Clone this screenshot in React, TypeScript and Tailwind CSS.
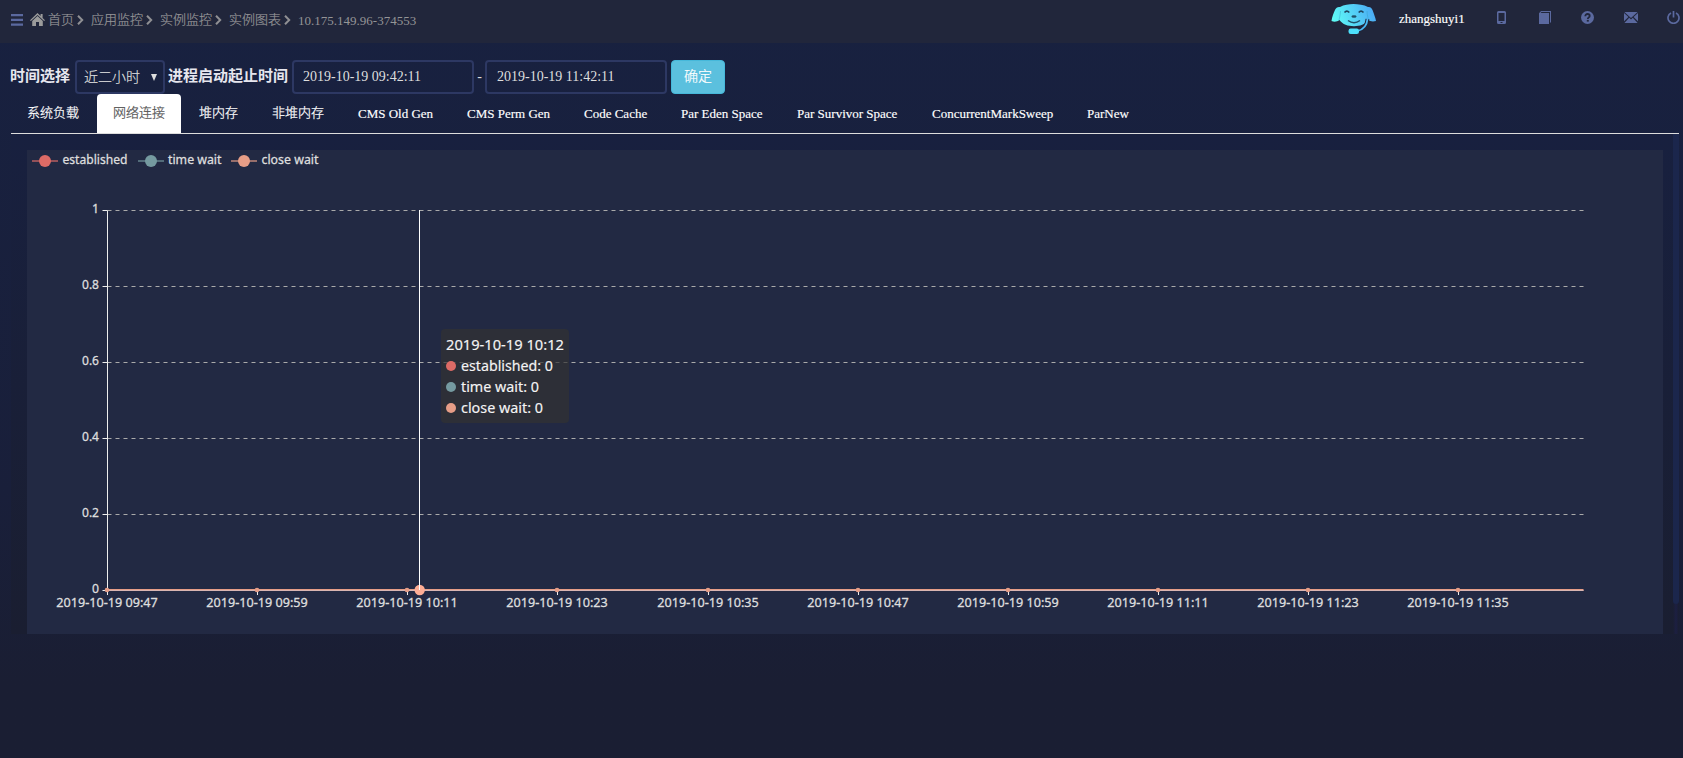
import React from "react";

const crumbs = ["首页", "应用监控", "实例监控", "实例图表"];

const tabs = [
  { label: "系统负载", width: "w-[84px]" },
  { label: "网络连接", width: "w-[84px]" },
  { label: "堆内存", width: "w-[71px]" },
  { label: "非堆内存", width: "w-[84px]" },
  { label: "CMS Old Gen", width: "w-[107px]", latin: true },
  { label: "CMS Perm Gen", width: "w-[115px]", latin: true },
  { label: "Code Cache", width: "w-[95px]", latin: true },
  { label: "Par Eden Space", width: "w-[114px]", latin: true },
  { label: "Par Survivor Space", width: "w-[133px]", latin: true },
  { label: "ConcurrentMarkSweep", width: "w-[153px]", latin: true },
  { label: "ParNew", width: "w-[75px]", latin: true },
];

const series = [
  { name: "established", color: "#dd6b66", x: 5, textX: 35.5, textWidth: 65 },
  { name: "time wait", color: "#759aa0", x: 111, textX: 141, textWidth: 53.5 },
  { name: "close wait", color: "#e69d87", x: 204, textX: 234.5, textWidth: 57 },
];

const yTicks = ["1", "0.8", "0.6", "0.4", "0.2", "0"];
const xTicks = ["09:47", "09:59", "10:11", "10:23", "10:35", "10:47", "10:59", "11:11", "11:23", "11:35"];

const AXIS_X = 80.5;
const AXIS_RIGHT = 1556.5;
const AXIS_TOP = 60.5;
const Y_STEP = 75.9;
const X_STEP = 150.15;

function Chevron() {
  return (
    <svg className="ml-[3px] mr-[7px] h-[10px] w-[7px]" viewBox="0 0 7 10">
      <path d="M1 .8 5.2 5 1 9.2" fill="none" stroke="#8f8f93" strokeWidth="2" />
    </svg>
  );
}

function HomeIcon() {
  return (
    <svg className="ml-[7px] mr-[3px] h-[13px] w-[15px]" viewBox="0 0 15 13" fill="#9b9b9b">
      <path d="M7.5 0 10.6 3V1h2v4L15 7.2l-.9.9-6.6-6.2L.9 8.1 0 7.2Z" />
      <path d="M7.5 3 12.8 8v5H9V9H6v4H2.2V8Z" />
    </svg>
  );
}

function Mascot() {
  return (
    <svg className="h-[31px] w-[46px]" viewBox="0 0 46 31">
      <defs>
        <linearGradient id="mascot" x1="0" x2="1" y1="0.6" y2="0.4">
          <stop offset="0" stopColor="#5ffdf6" />
          <stop offset="1" stopColor="#4aa8f5" />
        </linearGradient>
      </defs>
      <path
        d="M9 3C13 .8 18 0 22.500 0S33 .8 37 3c2-.4 3.500.5 4.500 3 1.500 4 3 8 3.500 11-3 .8-6 .4-8-1-3 4.500-8 6.200-14 6.200S11.500 20.500 8.500 16C6 18 3 18 .5 17 1 13 2.500 9 4 6c1-2.500 3-3.500 5-3Z"
        fill="url(#mascot)"
      />
      <path d="M13.500 8.500q2.300-2.800 4.800 0M27.700 8.500q2.300-2.800 4.800 0" fill="none" stroke="#204760" strokeWidth="1.600" />
      <path d="M9.500 7c-.3 4-.8 6.500-1.500 9M36 7c.3 4 .8 6.500 1.500 9" fill="none" stroke="#2f9cc0" strokeWidth="0.700" opacity="0.600" />
      <ellipse cx="23" cy="12.500" rx="2.600" ry="1.300" fill="#205069" />
      <path d="M17 16.500q6 4.500 12 0" fill="none" stroke="#205069" strokeWidth="1.500" />
      <path d="M36.500 15c-.5 6-4 10.500-10 12" fill="none" stroke="#21263b" strokeWidth="3.800" />
      <path d="M36.500 15c-.5 6-4 10.500-10 12" fill="none" stroke="#49baf7" strokeWidth="1.800" />
      <rect x="17.500" y="24.500" width="10.500" height="5.500" rx="2.200" fill="#4de0fb" />
    </svg>
  );
}

function Toolbar() {
  return (
    <div className="flex h-[35px] items-center">
      <svg className="mr-[33px] h-[14px] w-[9px]" viewBox="0 0 9 14">
        <path fillRule="evenodd" fill="#5b699f" d="M1.500 0h6A1.500 1.500 0 0 1 9 1.500v10A1.500 1.500 0 0 1 7.500 13h-6A1.500 1.500 0 0 1 0 11.500v-10A1.500 1.500 0 0 1 1.500 0ZM1.500 2v8h6V2Zm2 9v1h2v-1Z" />
      </svg>
      <svg className="mr-[30px] h-[13px] w-[12px]" viewBox="0 0 12 13" fill="#5b699f">
        <path d="M0 2.200 2 0h10v11l-1 1V1H2.500L1.500 2H10v11H0Z" />
      </svg>
      <svg className="mr-[30px] h-[13px] w-[13px]" viewBox="0 0 13 13">
        <circle cx="6.500" cy="6.500" r="6.500" fill="#5b699f" />
        <path d="M4.300 5.200c0-1.500.9-2.200 2.200-2.200s2.200.7 2.200 1.900c0 1.500-1.900 1.400-1.900 3" fill="none" stroke="#21263b" strokeWidth="1.800" />
        <path d="M5.800 8.900h2v1.700h-2z" fill="#21263b" />
      </svg>
      <svg className="mr-[29px] h-[11px] w-[14px]" viewBox="0 0 14 11" fill="#5b699f">
        <path d="M.4 0h13.200L7 6ZM0 1l4.400 4.100L0 9.200ZM14 1v8.200L9.600 5.100ZM.4 11l4.800-5.200L7 7.400l1.800-1.600 4.800 5.200Z" />
      </svg>
      <svg className="h-[13px] w-[13px]" viewBox="0 0 13 13" fill="none" stroke="#5b699f" strokeWidth="1.700">
        <path d="M4 1.900a5.500 5.500 0 1 0 5 0M6.500 0v6.500" />
      </svg>
    </div>
  );
}

function Header() {
  return (
    <header className="flex h-[43px] justify-between bg-[#21263b]">
      <nav className="flex h-[39px] items-center pl-[11px] text-[13px] text-[#949496]">
        <svg className="h-[12px] w-[12px]" viewBox="0 0 12 12" fill="#5b699f">
          <path d="M0 0h12v2.200H0zM0 4.800h12V7H0zM0 9.600h12v2.200H0z" />
        </svg>
        <HomeIcon />
        {crumbs.map((crumb) => (
          <React.Fragment key={crumb}>
            <span className="font-light [-webkit-text-stroke:0.2px_#949496]">{crumb}</span>
            <Chevron />
          </React.Fragment>
        ))}
        <span className="pt-[2px]">10.175.149.96-374553</span>
      </nav>
      <div className="flex pr-[3px]">
        <div className="pt-[4px]">
          <Mascot />
        </div>
        <span className="ml-[22px] mr-[32px] w-[66px] pt-[9px] text-[13px] leading-[20px] text-white [-webkit-text-stroke:0.15px_white]">zhangshuyi1</span>
        <Toolbar />
      </div>
    </header>
  );
}

function Filters() {
  return (
    <div className="flex h-[34px] items-center text-[14px] text-[#dedede]">
      <label className="-ml-px w-[65px] whitespace-nowrap pb-[2px] text-[15px] font-bold text-[#e6e6ee]">时间选择</label>
      <div className="flex h-[34px] w-[90px] items-center justify-between rounded-[4px] border-2 border-[#2d3863] pl-[7px] pr-[6px]">
        <span className="font-light [-webkit-text-stroke:0.2px_#dedede]">近二小时</span>
        <svg className="h-[7px] w-[6px]" viewBox="0 0 6 7">
          <path d="M0 0h6L3 7Z" fill="#dedede" />
        </svg>
      </div>
      <label className="ml-[3px] w-[124px] whitespace-nowrap pb-[2px] text-[15px] font-bold text-[#e6e6ee]">进程启动起止时间</label>
      <div className="flex h-[34px] w-[182px] items-center rounded-[4px] border-2 border-[#2d3863] pb-[2px] pl-[9px]">2019-10-19 09:42:11</div>
      <span className="w-[11px] pb-[2px] text-center">-</span>
      <div className="flex h-[34px] w-[182px] items-center rounded-[4px] border-2 border-[#2d3863] pb-[2px] pl-[10px]">2019-10-19 11:42:11</div>
      <button className="ml-[4px] h-[34px] w-[54px] rounded-[4px] border border-[#46b8da] bg-[#5bc0de] pb-[2px] font-light text-white [-webkit-text-stroke:0.2px_white]">确定</button>
    </div>
  );
}

function Tabs() {
  return (
    <div className="flex h-[40px] gap-[2px] border-b border-[#dddddd] text-[13px] text-white">
      {tabs.map((tab, i) => (
        <div
          key={tab.label}
          className={`${tab.width} flex h-[39px] items-center whitespace-nowrap pl-[16px] ${
            i === 1 ? "rounded-t-[4px] bg-white text-[#555555]" : ""
          } ${tab.latin ? "[-webkit-text-stroke:0.15px_white]" : "pb-[1px] font-light [-webkit-text-stroke:0.25px_currentColor]"}`}
        >
          {tab.label}
        </div>
      ))}
    </div>
  );
}

function Chart() {
  const baseline = AXIS_TOP + 5 * Y_STEP;
  return (
    <div className="relative h-[484px] w-[1636px] bg-[#222943]">
      <svg
        className="block h-[484px] w-[1636px] font-['Noto_Sans','Open_Sans',sans-serif] text-[13px] [&_text]:[stroke-width:0.3px] [&_text]:[stroke:#dedede]"
        viewBox="0 0 1636 484"
        fill="#dedede"
      >
        {series.map((s) => (
          <g key={s.name}>
            <path d={`M${s.x} 11h26`} stroke={s.color} strokeWidth="2" opacity="0.6" />
            <circle cx={s.x + 13} cy="11" r="6" fill={s.color} />
            <text x={s.textX} y="14" textLength={s.textWidth} lengthAdjust="spacingAndGlyphs">
              {s.name}
            </text>
          </g>
        ))}
        {yTicks.map((label, i) => {
          const y = Math.floor(AXIS_TOP + i * Y_STEP) + 0.5;
          return (
            <g key={label}>
              {i < 5 && <path d={`M${AXIS_X} ${y}H${AXIS_RIGHT}`} stroke="#aaaaaa" strokeDasharray="4 4" />}
              <path d={`M${AXIS_X - 5} ${y}h5`} stroke="#eeeeee" />
              <text
                x={AXIS_X - 8.500}
                y={y + 2.300}
                textAnchor="end"
                textLength={label.length > 1 ? 17 : 7}
                lengthAdjust="spacingAndGlyphs"
              >
                {label}
              </text>
            </g>
          );
        })}
        <path d={`M${AXIS_X} ${AXIS_TOP}V${baseline}`} stroke="#eeeeee" />
        {xTicks.map((time, i) => {
          const x = Math.floor(AXIS_X + i * X_STEP);
          return (
            <g key={time}>
              <path d={`M${x + 0.5} 440v5`} stroke="#eeeeee" />
              <text x={x} y="456.500" textAnchor="middle" textLength="101.500" lengthAdjust="spacingAndGlyphs">
                {`2019-10-19 ${time}`}
              </text>
            </g>
          );
        })}
        <path d={`M${AXIS_X} 440H${AXIS_RIGHT}`} stroke="#e69d87" strokeWidth="2" />
        <path d={`M${AXIS_X} 440.500H${AXIS_RIGHT}`} stroke="#d9b5b2" strokeWidth="1" />
        {xTicks.map((time, i) => (
          <circle key={time} cx={Math.floor(AXIS_X + i * X_STEP)} cy="440" r="2.300" fill="#e69d87" />
        ))}
        <circle cx="392.700" cy="440" r="5.200" fill="#fdad95" />
        <path d="M392.500 60V440" stroke="#ffffff" />
      </svg>
      <div className="absolute left-[414px] top-[179px] h-[94px] w-[128px] rounded-[4px] bg-[#323232]/70 p-[5px] font-['Noto_Sans','Open_Sans',sans-serif] text-[14px] leading-[21px] text-white">
        <svg
          className="block h-[84px] w-[118px] [&_text]:[stroke-width:0.15px] [&_text]:[stroke:#f4f4f4]"
          viewBox="0 0 118 84"
          fill="#f4f4f4"
        >
          <text x="0" y="15.500" textLength="118" lengthAdjust="spacingAndGlyphs">2019-10-19 10:12</text>
          {series.map((s, i) => (
            <g key={s.name}>
              <circle cx="5" cy={32 + i * 21} r="5" fill={s.color} />
              <text x="15" y={36.500 + i * 21} textLength={[92, 78, 82][i]} lengthAdjust="spacingAndGlyphs">
                {`${s.name}: 0`}
              </text>
            </g>
          ))}
        </svg>
      </div>
    </div>
  );
}

export default function App() {
  return (
    <div className="h-[758px] w-[1683px] overflow-hidden bg-linear-to-b from-[#182140] via-[#191f3a] via-65% to-[#1a1e33] to-90% font-['Liberation_Serif','Noto_Sans_CJK_SC',serif]">
      <Header />
      <main className="pl-[11px] pr-[4px] pt-[17px]">
        <Filters />
        <Tabs />
        <div className="flex h-[500px] bg-linear-to-b from-[#18203f] to-[#1a1e31] pl-[16px] pt-[16px]">
          <Chart />
          <div className="-mt-[16px] ml-[10px] flex h-[500px] w-[6px] justify-center bg-linear-to-r from-transparent via-[#1c1f42] to-transparent">
            <div className="h-[470px] w-[6px] rounded-b-[3px] bg-[#1b264c]" />
          </div>
        </div>
      </main>
    </div>
  );
}
